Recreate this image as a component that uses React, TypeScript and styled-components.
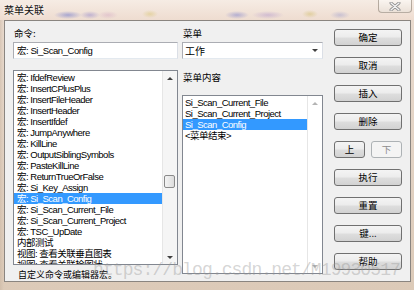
import React from 'react'
import styled, { createGlobalStyle } from 'styled-components'

const UI = `"Liberation Sans", "Noto Sans CJK SC", sans-serif`
const CJK = `"Noto Sans CJK SC", sans-serif`

const GlobalStyle = createGlobalStyle`
  html, body {
    margin: 0;
    padding: 0;
  }
  body {
    width: 414px;
    height: 290px;
    overflow: hidden;
    background: #e2d4c6;
  }
`

const commands = [
  '宏: IfdefReview',
  '宏: InsertCPlusPlus',
  '宏: InsertFileHeader',
  '宏: InsertHeader',
  '宏: InsertIfdef',
  '宏: JumpAnywhere',
  '宏: KillLine',
  '宏: OutputSiblingSymbols',
  '宏: PasteKillLine',
  '宏: ReturnTrueOrFalse',
  '宏: Si_Key_Assign',
  '宏: Si_Scan_Config',
  '宏: Si_Scan_Current_File',
  '宏: Si_Scan_Current_Project',
  '宏: TSC_UpDate',
  '内部测试',
  '视图: 查看关联垂直图表',
  '视图: 查看关联检图状',
]

const menuItems = ['Si_Scan_Current_File', 'Si_Scan_Current_Project', 'Si_Scan_Config', '<菜单结束>']

export default function App() {
  return (
    <Window>
      <GlobalStyle />
      <TitleBar>
        <Title>菜单关联</Title>
        <CloseButton>
          <svg width="12" height="9" viewBox="0 0 12 9">
            <path d="M2 1 L10 8 M10 1 L2 8" stroke="#8c8c8c" strokeWidth="3" strokeLinecap="round" />
            <path d="M2 1 L10 8 M10 1 L2 8" stroke="#f4f4f4" strokeWidth="1.4" strokeLinecap="round" />
          </svg>
        </CloseButton>
      </TitleBar>
      <Client>
        <LeftColumn>
          <Label>命令:</Label>
          <TextBox>宏: Si_Scan_Config</TextBox>
          <ListBox $height={195}>
            <Items>
              {commands.map((c) => (
                <Item key={c} $selected={c === '宏: Si_Scan_Config'}>{c}</Item>
              ))}
            </Items>
            <ScrollBar>
              <ArrowCell><Arrow $up /></ArrowCell>
              <Track>
                <Thumb style={{ marginTop: 90 }} />
              </Track>
              <ArrowCell><Arrow /></ArrowCell>
            </ScrollBar>
          </ListBox>
          <Status>自定义命令或编辑器宏。</Status>
        </LeftColumn>
        <MiddleColumn>
          <Label>菜单</Label>
          <Combo>
            <span>工作</span>
            <Arrow />
          </Combo>
          <Label $gap={12}>菜单内容</Label>
          <ListBox $height={179}>
            <Items $pad={2}>
              {menuItems.map((m) => (
                <Item key={m} $selected={m === 'Si_Scan_Config'}>{m}</Item>
              ))}
            </Items>
            <ScrollBar $disabled>
              <ArrowCell><Arrow $up $disabled /></ArrowCell>
              <Track />
              <ArrowCell><Arrow $disabled /></ArrowCell>
            </ScrollBar>
          </ListBox>
        </MiddleColumn>
        <ButtonColumn>
          <Button>确定</Button>
          <Button>取消</Button>
          <Button>插入</Button>
          <Button>删除</Button>
          <ButtonPair>
            <Button>上</Button>
            <Button disabled>下</Button>
          </ButtonPair>
          <Button>执行</Button>
          <Button>重置</Button>
          <Button>键...</Button>
          <Button>帮助</Button>
        </ButtonColumn>
      </Client>
      <Watermark>https://blog.csdn.net/M19930517</Watermark>
    </Window>
  )
}

const Window = styled.div`
  position: relative;
  width: 414px;
  height: 290px;
  display: flex;
  flex-direction: column;
  background:
    linear-gradient(90deg, rgba(200, 180, 160, 0.5), transparent 4px),
    linear-gradient(#eadcd0, #dccab8);
`

const TitleBar = styled.div`
  height: 20px;
  display: flex;
  justify-content: space-between;
  align-items: flex-start;
  background:
    radial-gradient(ellipse 14px 4px at 68px 15px, rgba(80, 95, 200, 0.45), transparent),
    radial-gradient(ellipse 10px 4px at 90px 15px, rgba(120, 110, 200, 0.4), transparent),
    radial-gradient(ellipse 10px 4px at 108px 15px, rgba(200, 150, 190, 0.35), transparent),
    radial-gradient(ellipse 8px 4px at 150px 14px, rgba(210, 190, 90, 0.4), transparent),
    radial-gradient(ellipse 12px 4px at 237px 15px, rgba(90, 100, 200, 0.4), transparent),
    radial-gradient(ellipse 16px 4px at 268px 15px, rgba(150, 120, 200, 0.35), transparent),
    radial-gradient(ellipse 8px 4px at 310px 14px, rgba(200, 180, 80, 0.4), transparent),
    radial-gradient(ellipse 10px 4px at 340px 15px, rgba(110, 120, 200, 0.3), transparent),
    linear-gradient(#f6ece4, #eedcd0);
`

const Title = styled.span`
  font-family: ${CJK};
  font-size: 10px;
  line-height: 12px;
  color: #111;
  padding: 4px 0 0 4px;
  text-shadow: 0 0 5px rgba(255, 255, 255, 0.9);
`

const CloseButton = styled.div`
  width: 34px;
  height: 13px;
  margin-right: 2px;
  box-sizing: border-box;
  border: 1px solid rgba(130, 115, 100, 0.55);
  border-top: none;
  border-radius: 0 0 4px 4px;
  background: linear-gradient(#faf5f0, #ebe1d8);
  display: flex;
  align-items: center;
  justify-content: center;
`

const Client = styled.div`
  height: 262px;
  margin: 0 3px 0 4px;
  box-sizing: border-box;
  border: 1px solid #8a8580;
  background: #f0f0f0;
  display: flex;
  padding: 0 7px 0 8px;
`

const LeftColumn = styled.div`
  width: 165px;
  display: flex;
  flex-direction: column;
`

const MiddleColumn = styled.div`
  width: 141px;
  margin-left: 4px;
  display: flex;
  flex-direction: column;
`

const ButtonColumn = styled.div`
  width: 68px;
  margin-left: 11px;
  padding-top: 8px;
  display: flex;
  flex-direction: column;
  gap: 11px;
`

const Label = styled.div<{ $gap?: number }>`
  font-family: ${CJK};
  font-size: 9.5px;
  line-height: 12px;
  color: #000;
  margin-top: ${(p) => p.$gap ?? 6}px;
  margin-bottom: ${(p) => (p.$gap ? 1 : 3)}px;
  padding-left: 1px;
`

const TextBox = styled.div`
  height: 17px;
  box-sizing: border-box;
  border: 1px solid #abadb3;
  border-bottom-color: #e3e9ef;
  border-right-color: #dbdfe6;
  background: #fff;
  padding-left: 3px;
  font-family: ${UI};
  font-size: 9.5px;
  letter-spacing: -0.45px;
  line-height: 15px;
  color: #000;
`

const Combo = styled(TextBox)`
  display: flex;
  justify-content: space-between;
  align-items: center;
  padding: 0 4px 0 2px;
  font-size: 10px;
  letter-spacing: 0;
  font-family: ${CJK};
`

const ListBox = styled.div<{ $height: number }>`
  height: ${(p) => p.$height}px;
  margin-top: 11px;
  box-sizing: border-box;
  border: 1px solid #828790;
  background: #fff;
  display: flex;
  overflow: hidden;
`

const Items = styled.div<{ $pad?: number }>`
  flex: 1;
  padding-top: 1px;
  min-width: 0;
  & > div {
    padding-left: ${(p) => p.$pad ?? 3}px;
  }
`

const Item = styled.div<{ $selected?: boolean }>`
  height: 11px;
  font-family: ${UI};
  font-size: 9.5px;
  letter-spacing: -0.5px;
  line-height: 11px;
  white-space: nowrap;
  color: ${(p) => (p.$selected ? '#fff' : '#000')};
  background: ${(p) => (p.$selected ? '#3399ff' : 'transparent')};
`

const ScrollBar = styled.div<{ $disabled?: boolean }>`
  width: 14px;
  display: flex;
  flex-direction: column;
  border-left: 1px solid #e6e6e6;
  background: ${(p) => (p.$disabled ? '#fff' : '#f5f5f5')};
`

const ArrowCell = styled.div`
  height: 14px;
  display: flex;
  align-items: center;
  justify-content: center;
`

const Track = styled.div`
  flex: 1;
`

const Thumb = styled.div`
  width: 11px;
  height: 13px;
  margin-left: 1px;
  box-sizing: border-box;
  border: 1px solid #8a8a8a;
  border-radius: 2px;
  background: linear-gradient(90deg, #f4f4f4, #dcdcdc);
`

const Arrow = styled.i<{ $up?: boolean; $disabled?: boolean }>`
  display: block;
  width: 0;
  height: 0;
  border-left: 3px solid transparent;
  border-right: 3px solid transparent;
  ${(p) => (p.$up ? 'border-bottom' : 'border-top')}: 3px solid ${(p) => (p.$disabled ? '#b4b4b4' : '#404040')};
`

const Status = styled.div`
  font-family: ${CJK};
  font-size: 9px;
  line-height: 12px;
  color: #000;
  margin-top: 4px;
  padding-left: 5px;
`

const Button = styled.button`
  height: 17px;
  width: 100%;
  padding: 0;
  box-sizing: border-box;
  border: 1px solid #707070;
  border-radius: 3px;
  background: linear-gradient(#f4f4f4 0%, #ececec 48%, #dedede 52%, #d2d2d2 100%);
  font-family: ${CJK};
  font-size: 9.5px;
  line-height: 15px;
  color: #000;

  &:disabled {
    border-color: #adb2b5;
    background: #f4f4f4;
    color: #8c8c8c;
  }
`

const ButtonPair = styled.div`
  display: flex;
  gap: 6px;
`

const Watermark = styled.div`
  position: absolute;
  left: 93px;
  top: 259px;
  font-family: "Liberation Mono", monospace;
  font-size: 18px;
  line-height: 22px;
  letter-spacing: -0.9px;
  color: rgba(150, 150, 150, 0.4);
  pointer-events: none;
  white-space: nowrap;
`
